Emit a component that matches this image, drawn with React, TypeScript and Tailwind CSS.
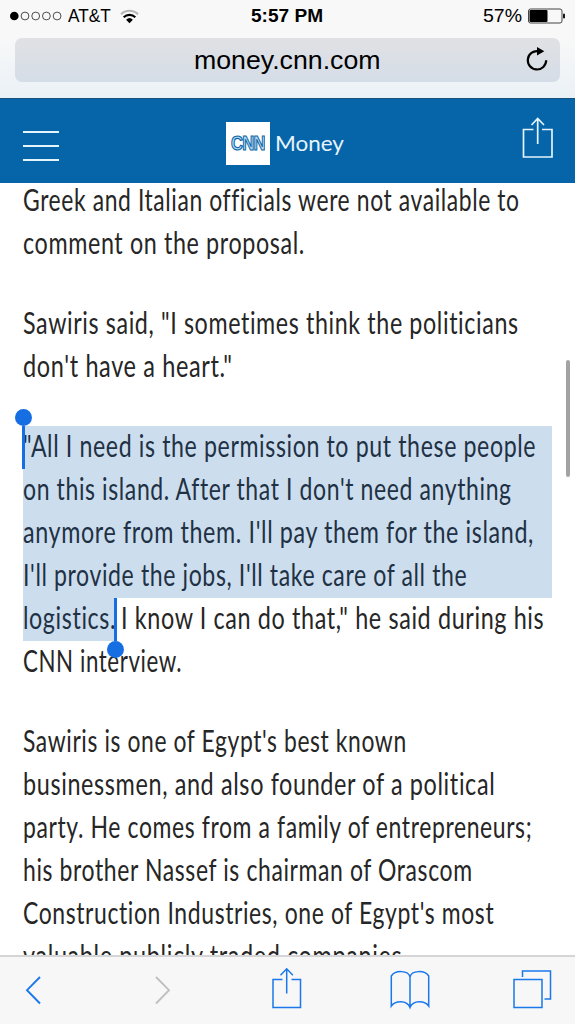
import { useLayoutEffect, useRef } from "react";
import type { ReactNode } from "react";
import clsx from "clsx";

type FitProps = {
	children: ReactNode;
	className?: string;
};

// Condenses (or widens) a single line of text to the width of its box
function Fit({ children, className }: FitProps) {
	const box = useRef<HTMLSpanElement>(null);
	const text = useRef<HTMLSpanElement>(null);

	useLayoutEffect(() => {
		if (!box.current || !text.current) return;
		const scale = box.current.offsetWidth / text.current.offsetWidth;
		text.current.style.transform = `scaleX(${scale})`;
	}, []);

	return (
		<span ref={box} className={clsx("block shrink-0", className)}>
			<span ref={text} className="inline-block origin-left whitespace-nowrap">
				{children}
			</span>
		</span>
	);
}

// One line of article text
function Line({ children, className }: FitProps) {
	return <Fit className={clsx("h-[43px]", className)}>{children}</Fit>;
}

function StatusBar() {
	return (
		<div className="grid h-8 grid-cols-3 items-center text-[18px] leading-8 text-black">
			<div className="flex items-center pl-[10px]">
				<svg width="53" height="10" viewBox="0 0 53 10" fill="none">
					<circle cx="4.3" cy="5" r="4.3" fill="#000" />
					{[15, 25.7, 36.4, 47.1].map((cx) => (
						<circle key={cx} cx={cx} cy="5" r="3.9" stroke="#222" strokeWidth="0.8" />
					))}
				</svg>
				<Fit className="ml-[5px] w-[43px]">AT&amp;T</Fit>
				<svg className="ml-[9px]" width="19" height="15" viewBox="0 0 19 15" fill="none">
					<path d="M1 5.2a12.2 12.2 0 0 1 17 0" stroke="#b5b5b5" strokeWidth="2" />
					<path d="M3.7 8.2a8.4 8.4 0 0 1 11.6 0" stroke="#000" strokeWidth="2.1" />
					<path d="M9.5 14.2 6.1 10.7a5 5 0 0 1 6.8 0z" fill="#000" />
				</svg>
			</div>
			<div className="flex justify-center font-bold">
				<Fit className="w-[72px]">5:57 PM</Fit>
			</div>
			<div className="flex items-center justify-end pr-[9px]">
				<Fit className="w-[39px]">57%</Fit>
				<svg className="ml-[6px]" width="38" height="16" viewBox="0 0 38 16" fill="none">
					<rect x="0.5" y="1" width="33.5" height="14" rx="2" stroke="#444" />
					<rect x="1.5" y="2" width="18" height="12" rx="1" fill="#000" />
					<rect x="35" y="5.5" width="2" height="5" rx="1" fill="#111" />
				</svg>
			</div>
		</div>
	);
}

function AddressBar() {
	return (
		<div className="mx-[15px] mt-1.5 grid h-11 grid-cols-[1fr_187px_1fr] items-center rounded-[7px] bg-linear-to-b from-[#e1e1e4] to-[#d4dde7]">
			<Fit className="col-start-2 w-[187px] text-[26px] leading-11 text-black">
				money.cnn.com
			</Fit>
			<button className="justify-self-end pr-3" aria-label="Reload">
				<svg width="22" height="26" viewBox="0 0 22 26" fill="none">
					<path d="M12.5 4.2A9.2 9.2 0 1 0 20.2 13.3" stroke="#000" strokeWidth="2.2" />
					<path d="M11 0 18.3 4.2 11 8.4z" fill="#000" />
				</svg>
			</button>
		</div>
	);
}

function SiteHeader() {
	return (
		<header className="flex h-[85px] shrink-0 items-center border-t border-[#17517d] bg-[#0665a9]">
			<button className="ml-[23px] flex w-9 flex-col gap-3 pt-[9px]" aria-label="Menu">
				<span className="h-0.5 bg-[#e3f4fc]" />
				<span className="h-0.5 bg-[#e3f4fc]" />
				<span className="h-0.5 bg-[#e3f4fc]" />
			</button>
			<div className="ml-[167px] mt-1 flex items-center">
				<div className="flex h-[43px] w-11 items-center justify-center bg-white">
					<Fit className="w-[34px] text-[21px] leading-8 font-bold tracking-[-1px] text-[#b5d9ef] [-webkit-text-stroke:1.2px_#0a66a8]">
						CNN
					</Fit>
				</div>
				<Fit className="ml-[5px] w-[69px] font-['Lato',sans-serif] text-[20.5px] leading-8 text-[#e6f4fc]">
					Money
				</Fit>
			</div>
			<button className="mr-[22px] ml-auto -mt-1.5" aria-label="Share">
				<svg width="31" height="42" viewBox="0 0 31 42" fill="none" stroke="#e3f4fc" strokeWidth="1.7">
					<path d="M11.5 12.5H1.5V40H30V12.5H20" />
					<path d="M15.7 27V2M9.5 8l6.2-6.5L22 8" />
				</svg>
			</button>
		</header>
	);
}

function Article() {
	return (
		<article className="-mt-[3px] flex flex-col gap-[37px] px-[23px] font-['Lato','Open_Sans',sans-serif] text-[30px] leading-[38px] tracking-[0.8px] text-[#262626]">
			<p>
				<Line className="w-[497px]">Greek and Italian officials were not available to</Line>
				<Line className="w-[282px]">comment on the proposal.</Line>
			</p>
			<p>
				<Line className="w-[496px]">Sawiris said, "I sometimes think the politicians</Line>
				<Line className="w-[210px]">don't have a heart."</Line>
			</p>
			<div className="relative">
				<p>
					<span className="block bg-[#ccddee] text-[#1f3144]">
						<Line className="w-[513px]">"All I need is the permission to put these people</Line>
						<Line className="w-[489px]">on this island. After that I don't need anything</Line>
						<Line className="w-[511px]">anymore from them. I'll pay them for the island,</Line>
						<Line className="w-[444px]">I'll provide the jobs, I'll take care of all the</Line>
					</span>
					<span className="flex">
						<Line className="w-[93px] bg-[#ccddee] text-[#1f3144]">logistics.</Line>
						<Line className="ml-[5px] w-[423px]">I know I can do that," he said during his</Line>
					</span>
					<Line className="w-[159px]">CNN interview.</Line>
				</p>
				{/* Selection handles */}
				<span className="absolute top-0 -left-px h-[43px] w-[3px] bg-[#156fe3]" />
				<span className="absolute -top-[17px] -left-2 size-[17px] rounded-full bg-[#156fe3]" />
				<span className="absolute top-[172px] left-[91px] h-[43px] w-[3px] bg-[#156fe3]" />
				<span className="absolute top-[215px] left-[84px] size-[17px] rounded-full bg-[#156fe3]" />
			</div>
			<p>
				<Line className="w-[384px]">Sawiris is one of Egypt's best known</Line>
				<Line className="w-[472px]">businessmen, and also founder of a political</Line>
				<Line className="w-[509px]">party. He comes from a family of entrepreneurs;</Line>
				<Line className="w-[450px]">his brother Nassef is chairman of Orascom</Line>
				<Line className="w-[471px]">Construction Industries, one of Egypt's most</Line>
				<Line className="w-[385px]">valuable publicly traded companies.</Line>
			</p>
		</article>
	);
}

function Toolbar() {
	return (
		<nav className="flex h-[69px] shrink-0 items-center border-t-2 border-[#d5d5d7] bg-[#f7f7f8] text-[#1a78ea]">
			<button className="ml-[25px]" aria-label="Back">
				<svg width="17" height="40" viewBox="0 0 17 40" fill="none" stroke="currentColor" strokeWidth="1.9">
					<path d="M15 6 2 19.2 15 32.5" />
				</svg>
			</button>
			<button className="ml-[112px] text-[#c0c0c2]" aria-label="Forward">
				<svg width="17" height="40" viewBox="0 0 17 40" fill="none" stroke="currentColor" strokeWidth="1.9">
					<path d="M2 6l13 13.2L2 32.5" />
				</svg>
			</button>
			<button className="ml-[100px] -mt-[3px]" aria-label="Share page">
				<svg width="32" height="44" viewBox="0 0 32 44" fill="none" stroke="currentColor" strokeWidth="1.5">
					<path d="M11.5 12.5H2v28h27.5v-28h-9" />
					<path d="M15.7 26.5V2M9.5 8.3l6.2-6.5 6.2 6.5" />
				</svg>
			</button>
			<button className="ml-[86px] -mt-[3px]" aria-label="Bookmarks">
				<svg width="42" height="44" viewBox="0 0 42 44" fill="none" stroke="currentColor" strokeWidth="1.5">
					<path d="M21 10C19.500 3 6 3 2.300 9V39C6 33.500 18 32.500 21 40.500 24 32.500 36 33.500 39.700 39V9C36 3 22.500 3 21 10zV40.500" />
				</svg>
			</button>
			<button className="ml-[81px] -mt-[3px]" aria-label="Tabs">
				<svg width="40" height="44" viewBox="0 0 40 44" fill="none" stroke="currentColor" strokeWidth="1.5">
					<path d="M2 12.5h28v28H2z" />
					<path d="M10.5 10V4h28v28h-6" />
				</svg>
			</button>
		</nav>
	);
}

export default function App() {
	return (
		<div className="flex h-[1024px] w-[575px] flex-col overflow-hidden bg-white font-['Liberation_Sans',Arial,sans-serif]">
			<div className="h-[98px] shrink-0 bg-linear-to-b from-[#f8f8f8] from-40% to-[#eaf1f6]">
				<StatusBar />
				<AddressBar />
			</div>
			<SiteHeader />
			<main className="relative min-h-0 flex-1 overflow-hidden">
				<Article />
				{/* Scroll indicator */}
				<div className="absolute top-[177px] right-[5px] h-[117px] w-1 rounded-full bg-[#a3a3a3]" />
			</main>
			<Toolbar />
		</div>
	);
}
